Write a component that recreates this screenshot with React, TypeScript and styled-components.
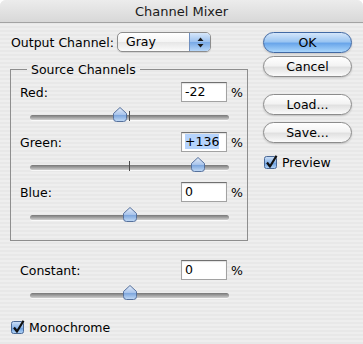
import React from 'react'
import styled, { createGlobalStyle } from 'styled-components'

const FONT = '"Lucida Grande", "DejaVu Sans", "Liberation Sans", sans-serif'

const GlobalStyle = createGlobalStyle`
  html, body { margin: 0; padding: 0; background: #ffffff; }
  body { font-family: ${FONT}; font-size: 12.5px; color: #000; }
`

const Window = styled.div`
  width: 363px;
  height: 344px;
  overflow: hidden;
  border-radius: 6px 6px 0 0;
  background: repeating-linear-gradient(to bottom, #eeeeee 0 2px, #e8e8e8 2px 4px);
  display: flex;
  flex-direction: column;
`

const TitleBar = styled.div`
  height: 23px;
  flex: none;
  box-sizing: border-box;
  background: linear-gradient(#ececec, #d8d8d8);
  border-bottom: 1px solid #a3a3a3;
  display: flex;
  align-items: center;
  justify-content: center;
  color: #1a1a1a;
  font-size: 13px;
`

const Body = styled.div`
  display: flex;
  gap: 15px;
  padding: 9px 11px 0 10px;
`

const LeftColumn = styled.div`
  width: 238px;
  display: flex;
  flex-direction: column;
`

const OutputRow = styled.div`
  height: 20px;
  display: flex;
  align-items: center;
`

const OutputLabel = styled.span`
  width: 107px;
  padding-left: 1px;
  box-sizing: border-box;
`

const Popup = styled.div`
  width: 94px;
  height: 20px;
  box-sizing: border-box;
  display: flex;
  border: 1px solid #8d8d8d;
  border-radius: 5px;
  background: linear-gradient(#ffffff, #f4f4f4 50%, #e6e6e6 52%, #fbfbfb);
  box-shadow: 0 1px 1px rgba(0, 0, 0, 0.12);
  overflow: hidden;
`

const PopupText = styled.span`
  flex: 1;
  padding-left: 8px;
  line-height: 18px;
`

const PopupArrows = styled.span`
  width: 20px;
  display: flex;
  align-items: center;
  justify-content: center;
  border-left: 1px solid #6f8fbf;
  background: linear-gradient(#d7e7fa, #9dc2ef 48%, #78a9e6 52%, #b6d6f8);
`

const Group = styled.fieldset`
  margin: 10px 0 0;
  padding: 5px 7px 14px 9px;
  border: 1px solid #8e8e8e;
  min-width: 0;
  display: flex;
  flex-direction: column;
  gap: 6px;
`

const Legend = styled.legend`
  margin-left: 7px;
  padding: 0 4px;
  line-height: 15px;
`

const Block = styled.div`
  display: grid;
  grid-template-columns: 1fr 46px 13px;
  grid-template-rows: 20px 24px;
`

const Label = styled.span`
  align-self: center;
`

const Field = styled.div`
  height: 20px;
  box-sizing: border-box;
  border: 1px solid #a2a2a2;
  border-top-color: #707070;
  background: #ffffff;
  box-shadow: inset 0 1px 1px rgba(0, 0, 0, 0.12);
  padding-left: 3px;
  line-height: 18px;
`

const Selected = styled.span`
  background: #b5d3fc;
`

const Percent = styled.span`
  align-self: center;
  padding-left: 4px;
`

const Slider = styled.div`
  grid-column: 1 / -1;
  position: relative;
  margin: 0 11px 0 10px;
`

const Track = styled.div`
  margin-top: 13px;
  height: 5px;
  border-radius: 3px;
  background: linear-gradient(#767676, #9d9d9d 45%, #cfcfcf);
  box-shadow: 0 1px 0 rgba(255, 255, 255, 0.7);
`

const Tick = styled.div`
  position: absolute;
  left: 99px;
  top: 9px;
  width: 1px;
  height: 10px;
  background: #4d4d4d;
`

const ThumbWrap = styled.div`
  position: absolute;
  top: 5px;
  width: 14px;
  height: 15px;
`

const ConstantBlock = styled(Block)`
  margin: 19px 8px 0 10px;
`

const CheckRow = styled.label<{ $top: number }>`
  display: flex;
  align-items: center;
  gap: 4px;
  height: 14px;
  margin-top: ${(p) => p.$top}px;
  padding-left: 1px;
`

const RightColumn = styled.div`
  width: 89px;
  display: flex;
  flex-direction: column;
`

const Button = styled.div<{ $primary?: boolean; $top: number }>`
  height: 21px;
  box-sizing: border-box;
  margin-top: ${(p) => p.$top}px;
  border-radius: 11px;
  display: flex;
  align-items: center;
  justify-content: center;
  border: 1px solid ${(p) => (p.$primary ? '#4169a4' : '#8c8c8c')};
  background: ${(p) =>
    p.$primary
      ? 'linear-gradient(#d4e6fa, #9cc6f2 45%, #6aa6ea 55%, #aad6fc)'
      : 'linear-gradient(#ffffff, #f3f3f3 45%, #e1e1e1 55%, #fbfbfb)'};
  box-shadow: 0 1px 2px rgba(0, 0, 0, 0.18);
`

const Thumb = () => (
  <svg width="14" height="15" viewBox="0 0 14 15">
    <defs>
      <linearGradient id="thumbFill" x1="0" y1="0" x2="0" y2="1">
        <stop offset="0" stopColor="#e4edf9" />
        <stop offset="0.5" stopColor="#aac5ec" />
        <stop offset="0.56" stopColor="#7ea7dd" />
        <stop offset="1" stopColor="#c3dbf6" />
      </linearGradient>
    </defs>
    <path
      d="M7 0.5 L13.5 6.5 V11.5 Q13.5 14.5 10.5 14.5 H3.5 Q0.5 14.5 0.5 11.5 V6.5 Z"
      fill="url(#thumbFill)"
      stroke="#56719c"
    />
  </svg>
)

const CheckBox = () => (
  <svg width="14" height="14" viewBox="0 0 14 14">
    <defs>
      <linearGradient id="checkFill" x1="0" y1="0" x2="0" y2="1">
        <stop offset="0" stopColor="#cfe1f7" />
        <stop offset="0.5" stopColor="#8db6e9" />
        <stop offset="0.55" stopColor="#6a9fe0" />
        <stop offset="1" stopColor="#b4d5f7" />
      </linearGradient>
    </defs>
    <rect x="0.5" y="1.5" width="12" height="12" rx="2" fill="url(#checkFill)" stroke="#4a6895" />
    <path d="M3 7.5 L6 11.5 L12.5 0.8" fill="none" stroke="#111" strokeWidth="2.2" strokeLinejoin="round" />
  </svg>
)

const Arrows = () => (
  <svg width="7" height="11" viewBox="0 0 7 11">
    <path d="M3.5 0.5 L6.5 4 H0.5 Z M0.5 7 H6.5 L3.5 10.5 Z" fill="#1b1b1b" />
  </svg>
)

type Channel = { name: string; value: string; pos: number; selected?: boolean }

const channels: Channel[] = [
  { name: 'Red:', value: '-22', pos: 89.5 },
  { name: 'Green:', value: '+136', pos: 168, selected: true },
  { name: 'Blue:', value: '0', pos: 100 },
]

const SliderRow = ({ pos }: { pos: number }) => (
  <Slider>
    <Track />
    <Tick />
    <ThumbWrap style={{ left: pos - 7 }}>
      <Thumb />
    </ThumbWrap>
  </Slider>
)

export default function App() {
  return (
    <>
      <GlobalStyle />
      <Window>
        <TitleBar>Channel Mixer</TitleBar>
        <Body>
          <LeftColumn>
            <OutputRow>
              <OutputLabel>Output Channel:</OutputLabel>
              <Popup>
                <PopupText>Gray</PopupText>
                <PopupArrows>
                  <Arrows />
                </PopupArrows>
              </Popup>
            </OutputRow>
            <Group>
              <Legend>Source Channels</Legend>
              {channels.map((c) => (
                <Block key={c.name}>
                  <Label>{c.name}</Label>
                  <Field>{c.selected ? <Selected>{c.value}</Selected> : c.value}</Field>
                  <Percent>%</Percent>
                  <SliderRow pos={c.pos} />
                </Block>
              ))}
            </Group>
            <ConstantBlock>
              <Label>Constant:</Label>
              <Field>0</Field>
              <Percent>%</Percent>
              <SliderRow pos={100} />
            </ConstantBlock>
            <CheckRow $top={16}>
              <CheckBox />
              Monochrome
            </CheckRow>
          </LeftColumn>
          <RightColumn>
            <Button $primary $top={0}>OK</Button>
            <Button $top={3}>Cancel</Button>
            <Button $top={17}>Load...</Button>
            <Button $top={7}>Save...</Button>
            <CheckRow $top={12}>
              <CheckBox />
              Preview
            </CheckRow>
          </RightColumn>
        </Body>
      </Window>
    </>
  )
}
